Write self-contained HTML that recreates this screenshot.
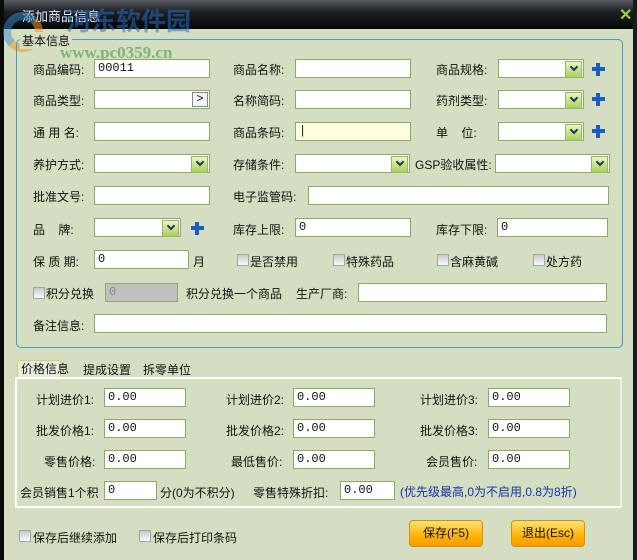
<!DOCTYPE html>
<html><head><meta charset="utf-8"><style>
*{box-sizing:border-box;margin:0;padding:0}
body{width:637px;height:560px;overflow:hidden;background:#d4dfc1;font:12px "Liberation Sans","Noto Sans CJK SC",sans-serif;color:#111;position:relative}
.a{position:absolute;white-space:nowrap}
.title{left:0;top:0;width:637px;height:29px;background:linear-gradient(#5a5e62,#1d2124 40%,#050607);}
.lb{left:0;top:0;width:4px;height:560px;background:#0a0a0a}
.rb{right:0;top:0;width:4px;height:560px;background:#1a1a1a}
.inp{position:absolute;height:19px;background:#fff;border:1px solid #8fa86a;font-size:12px;line-height:17px;padding-left:3px;font-family:"Liberation Mono",monospace}
.cb::after{content:"";position:absolute;right:1px;top:1px;width:15px;height:15px;background:linear-gradient(#eaf6c4,#a9d05a);border:1px solid #9bb46a}
.cb::before{content:"";position:absolute;right:6px;top:4px;width:4px;height:4px;border-right:2px solid #235;border-bottom:2px solid #235;transform:rotate(45deg);z-index:2}
.plus{position:absolute;width:13px;height:13px}
.plus::before{content:"";position:absolute;left:4px;top:0;width:4px;height:13px;background:#1a5cc0}
.plus::after{content:"";position:absolute;left:0;top:4px;width:13px;height:4px;background:#1a5cc0}
.chk{position:absolute;width:12px;height:12px;background:linear-gradient(#c9c9c9,#fafafa);border:1px solid #9aa}
.btn{position:absolute;width:74px;height:27px;border-radius:4px;border:1px solid #d88f00;background:linear-gradient(#ffe27a,#ffb300 60%,#f99a00);text-align:center;line-height:25px;font-size:12px}
</style></head><body>
<div class="a title"></div>
<div class="a lb"></div><div class="a rb"></div>
<div class="a" style="left:22px;top:6px;color:#dfe9ff;font-size:13px">添加商品信息</div>
<div class="a" style="left:66px;top:2px;color:rgba(40,110,190,.55);font-size:25px;font-weight:bold">河东软件园</div>
<div class="a" style="left:60px;top:43px;color:rgba(60,140,60,.55);font-size:17px;font-weight:bold;font-family:'Liberation Serif',serif">www.pc0359.cn</div>
<div class="a" style="left:3px;top:12px;width:40px;height:40px;border-radius:50%;border:8px solid rgba(60,140,210,.5);border-right-color:rgba(240,150,40,.55);border-bottom-color:rgba(240,150,40,.55)"></div>
<div class="a" style="left:619px;top:5px;color:#9bd040;font-size:16px;font-weight:bold">✕</div>
<div class="a" style="left:16px;top:39px;width:607px;height:309px;border:1px solid #4f98c6;border-radius:5px"></div>
<div class="a" style="left:20px;top:32px;background:#d4dfc1;padding:0 2px">基本信息</div>

<div class="a" style="left:33px;top:61px">商品编码:</div><div class="inp" style="left:94px;top:59px;width:116px">00011</div>
<div class="a" style="left:233px;top:61px">商品名称:</div><div class="inp" style="left:295px;top:59px;width:116px"></div>
<div class="a" style="left:436px;top:61px">商品规格:</div><div class="inp cb" style="left:498px;top:59px;width:86px"></div><div class="plus" style="left:592px;top:63px"></div>

<div class="a" style="left:33px;top:92px">商品类型:</div><div class="inp" style="left:94px;top:90px;width:116px"><span style="position:absolute;right:1px;top:1px;width:16px;height:15px;background:#f2f2f2;border:1px solid #888;line-height:13px;text-align:center">&gt;</span></div>
<div class="a" style="left:233px;top:92px">名称简码:</div><div class="inp" style="left:295px;top:90px;width:116px"></div>
<div class="a" style="left:436px;top:92px">药剂类型:</div><div class="inp cb" style="left:498px;top:90px;width:86px"></div><div class="plus" style="left:592px;top:93px"></div>

<div class="a" style="left:33px;top:124px">通 用 名:</div><div class="inp" style="left:94px;top:122px;width:116px"></div>
<div class="a" style="left:233px;top:124px">商品条码:</div><div class="inp" style="left:295px;top:122px;width:116px;background:#ffffe0">|</div>
<div class="a" style="left:436px;top:124px">单 &nbsp; &nbsp;位:</div><div class="inp cb" style="left:498px;top:122px;width:86px"></div><div class="plus" style="left:592px;top:125px"></div>

<div class="a" style="left:33px;top:156px">养护方式:</div><div class="inp cb" style="left:94px;top:154px;width:116px"></div>
<div class="a" style="left:233px;top:156px">存储条件:</div><div class="inp cb" style="left:295px;top:154px;width:115px"></div>
<div class="a" style="left:415px;top:156px">GSP验收属性:</div><div class="inp cb" style="left:495px;top:154px;width:115px"></div>

<div class="a" style="left:33px;top:188px">批准文号:</div><div class="inp" style="left:94px;top:186px;width:116px"></div>
<div class="a" style="left:233px;top:188px">电子监管码:</div><div class="inp" style="left:308px;top:186px;width:301px"></div>

<div class="a" style="left:33px;top:221px">品 &nbsp; &nbsp;牌:</div><div class="inp cb" style="left:94px;top:218px;width:87px"></div><div class="plus" style="left:191px;top:222px"></div>
<div class="a" style="left:233px;top:221px">库存上限:</div><div class="inp" style="left:295px;top:218px;width:116px">0</div>
<div class="a" style="left:436px;top:221px">库存下限:</div><div class="inp" style="left:497px;top:218px;width:111px">0</div>

<div class="a" style="left:33px;top:253px">保 质 期:</div><div class="inp" style="left:94px;top:250px;width:95px">0</div>
<div class="a" style="left:193px;top:253px">月</div>
<div class="chk" style="left:237px;top:254px"></div><div class="a" style="left:250px;top:253px">是否禁用</div>
<div class="chk" style="left:333px;top:254px"></div><div class="a" style="left:346px;top:253px">特殊药品</div>
<div class="chk" style="left:437px;top:254px"></div><div class="a" style="left:450px;top:253px">含麻黄碱</div>
<div class="chk" style="left:533px;top:254px"></div><div class="a" style="left:546px;top:253px">处方药</div>

<div class="chk" style="left:33px;top:287px"></div><div class="a" style="left:46px;top:285px">积分兑换</div>
<div class="inp" style="left:105px;top:283px;width:73px;background:#c0c0c0;color:#888">0</div>
<div class="a" style="left:186px;top:285px">积分兑换一个商品</div>
<div class="a" style="left:296px;top:285px">生产厂商:</div><div class="inp" style="left:358px;top:283px;width:249px"></div>

<div class="a" style="left:33px;top:317px">备注信息:</div><div class="inp" style="left:94px;top:314px;width:513px"></div>

<div class="a" style="left:17px;top:360px;width:44px;height:18px;background:#e6edd8;border:1px solid #e9c27a;border-bottom:none;border-radius:3px 3px 0 0;padding-left:3px;line-height:16px">价格信息</div>
<div class="a" style="left:83px;top:361px">提成设置</div>
<div class="a" style="left:143px;top:361px">拆零单位</div>
<div class="a" style="left:15px;top:377px;width:607px;height:131px;border:2px solid #fff;border-right-color:#eee"></div>

<div class="a" style="left:36px;top:391px">计划进价1:</div><div class="inp" style="left:104px;top:388px;width:82px">0.00</div>
<div class="a" style="left:226px;top:391px">计划进价2:</div><div class="inp" style="left:293px;top:388px;width:82px">0.00</div>
<div class="a" style="left:420px;top:391px">计划进价3:</div><div class="inp" style="left:488px;top:388px;width:82px">0.00</div>

<div class="a" style="left:36px;top:422px">批发价格1:</div><div class="inp" style="left:104px;top:419px;width:82px">0.00</div>
<div class="a" style="left:226px;top:422px">批发价格2:</div><div class="inp" style="left:293px;top:419px;width:82px">0.00</div>
<div class="a" style="left:420px;top:422px">批发价格3:</div><div class="inp" style="left:488px;top:419px;width:82px">0.00</div>

<div class="a" style="left:44px;top:453px">零售价格:</div><div class="inp" style="left:104px;top:450px;width:82px">0.00</div>
<div class="a" style="left:231px;top:453px">最低售价:</div><div class="inp" style="left:293px;top:450px;width:82px">0.00</div>
<div class="a" style="left:426px;top:453px">会员售价:</div><div class="inp" style="left:488px;top:450px;width:82px">0.00</div>

<div class="a" style="left:20px;top:484px">会员销售1个积</div><div class="inp" style="left:104px;top:481px;width:53px">0</div>
<div class="a" style="left:160px;top:484px">分(0为不积分)</div>
<div class="a" style="left:253px;top:484px">零售特殊折扣:</div><div class="inp" style="left:340px;top:481px;width:55px">0.00</div>
<div class="a" style="left:400px;top:483px;color:#1530b0">(优先级最高,0为不启用,0.8为8折)</div>

<div class="chk" style="left:19px;top:530px"></div><div class="a" style="left:33px;top:529px">保存后继续添加</div>
<div class="chk" style="left:139px;top:530px"></div><div class="a" style="left:153px;top:529px">保存后打印条码</div>
<div class="btn" style="left:409px;top:520px">保存(F5)</div>
<div class="btn" style="left:511px;top:520px">退出(Esc)</div>
</body></html>
